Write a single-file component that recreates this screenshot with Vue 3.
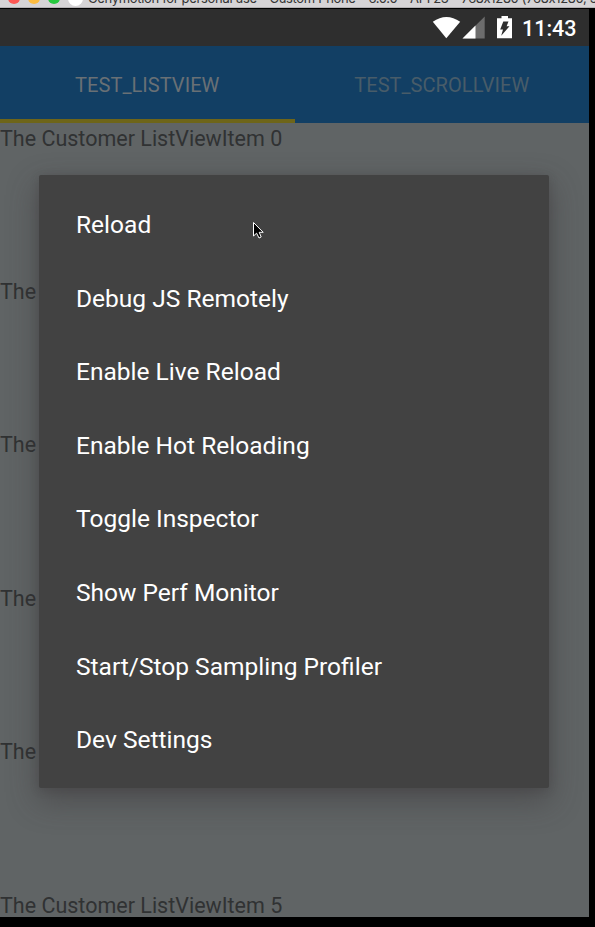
<script setup>
const rows = [0, 1, 2, 3, 4, 5]
const menu = [
  'Reload',
  'Debug JS Remotely',
  'Enable Live Reload',
  'Enable Hot Reloading',
  'Toggle Inspector',
  'Show Perf Monitor',
  'Start/Stop Sampling Profiler',
  'Dev Settings',
]
</script>

<template>
  <div class="window">
    <header class="titlebar">
      <div class="title-row">
        <i class="light red"></i>
        <i class="light yellow"></i>
        <i class="light green"></i>
        <i class="app-dot"></i>
        <span class="title">Genymotion for personal use – Custom Phone – 6.0.0 – API 23 – 768x1280 (768x1280, 320dpi)</span>
      </div>
    </header>
    <div class="phone">
      <div class="status">
        <svg class="status-icons" width="84" height="37" viewBox="0 0 84 37">
          <path d="M0.8 12.8 Q14.4 3 28.2 12.8 L14.3 29.3 Z" fill="#fff" />
          <path d="M52.7 7.4 V29.6 H30.5 Z" fill="#6d6d6d" />
          <path d="M43.5 16.6 V29.6 H30.5 Z" fill="#fff" />
          <path d="M69.5 7 H76 V9.2 H80 V29.2 H65 V9.2 H69.5 Z" fill="#fff" />
          <path d="M71.3 12.6 H76.5 L74.6 17.3 H77.5 L69.2 26.8 L71 20.6 H68.2 Z" fill="#2e2e2e" />
        </svg>
        <span class="clock">11:43</span>
      </div>
      <nav class="tabs">
        <div class="tab active"><span>TEST_LISTVIEW</span></div>
        <div class="tab"><span>TEST_SCROLLVIEW</span></div>
      </nav>
      <main class="list">
        <div v-for="n in rows" :key="n" class="row">The Customer ListViewItem {{ n }}</div>
      </main>
    </div>
    <div class="dialog">
      <div v-for="item in menu" :key="item" class="item">{{ item }}</div>
    </div>
    <svg class="cursor" width="14" height="20" viewBox="0 0 14 20">
      <path d="M1.5 1.5 V15 L4.6 12.2 L7 17 L9.2 16 L7.2 11.3 H11.2 Z" fill="#000" stroke="#fff" stroke-width="1" />
    </svg>
  </div>
</template>

<style>
body {
  margin: 0;
  background: #000;
}
</style>

<style scoped>
.window {
  position: relative;
  width: 595px;
  height: 927px;
  overflow: hidden;
  background: #000;
  font-family: Roboto, sans-serif;
}
.titlebar {
  box-sizing: border-box;
  height: 8px;
  display: flex;
  align-items: flex-end;
  overflow: hidden;
  background: #d6d4d6;
  border-bottom: 1px solid #b4b2b4;
}
.title-row {
  display: flex;
  align-items: center;
  height: 18px;
  padding-left: 8px;
}
.light {
  flex: none;
  width: 12px;
  height: 12px;
  margin-right: 8px;
  border-radius: 50%;
}
.red { background: #fc5753; }
.yellow { background: #fdbc40; }
.green { background: #27c93f; }
.app-dot {
  flex: none;
  width: 15px;
  height: 15px;
  margin-right: 5px;
  border-radius: 50%;
  background: #fff;
}
.title {
  font-family: Inter, sans-serif;
  font-size: 13px;
  letter-spacing: -0.33px;
  font-feature-settings: "calt" 0;
  line-height: 18px;
  white-space: nowrap;
  color: #353535;
}
.phone {
  width: 589px;
  height: 908px;
  margin-top: 1px;
  overflow: hidden;
  background: #606465;
}
.status {
  display: flex;
  align-items: center;
  height: 37px;
  padding-left: 432px;
  background: #2e2e2e;
}
.status-icons {
  flex: none;
}
.clock {
  margin-left: 6px;
  padding-top: 1px;
  font-size: 21.5px;
  font-weight: 500;
  color: #fff;
}
.tabs {
  display: flex;
  height: 77px;
  background: #123f64;
}
.tab {
  box-sizing: border-box;
  flex: 1;
  display: flex;
  align-items: center;
  justify-content: center;
  padding-top: 4px;
  border-bottom: 4px solid transparent;
  font-size: 20.1px;
  color: #485c69;
}
.tab.active {
  border-bottom-color: #6e6519;
  color: #697075;
}
.row {
  box-sizing: border-box;
  height: 153.4px;
  padding-top: 2.6px;
  font-size: 21.5px;
  line-height: 26px;
  color: #303233;
  white-space: nowrap;
}
.dialog {
  position: absolute;
  box-sizing: border-box;
  left: 39px;
  top: 175px;
  width: 510px;
  height: 613px;
  padding: 13px 37px 11px;
  border-radius: 2px;
  background: #424242;
  box-shadow: 0 12px 30px 2px rgba(55, 50, 54, 0.45), 0 2px 8px rgba(55, 50, 54, 0.25);
}
.item {
  height: 73.62px;
  font-size: 24.52px;
  line-height: 74px;
  white-space: nowrap;
  color: #fff;
}
.cursor {
  position: absolute;
  left: 252px;
  top: 221px;
}
</style>
